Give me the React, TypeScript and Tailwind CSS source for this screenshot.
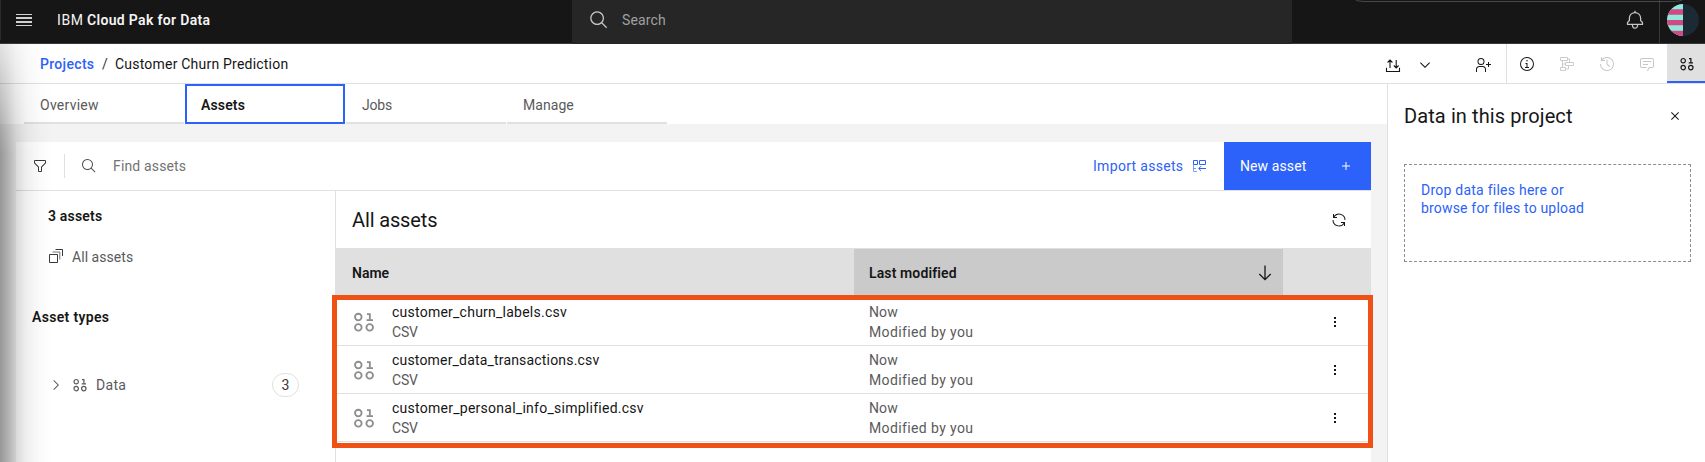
import React from "react";

type IconProps = { size?: number; box?: number; className?: string; children: React.ReactNode };

function Icon({ size = 16, box = 32, className = "", children }: IconProps) {
  return (
    <svg width={size} height={size} viewBox={`0 0 ${box} ${box}`} fill="currentColor" className={`shrink-0 ${className}`}>
      {children}
    </svg>
  );
}

function SearchIcon({ size = 16, className = "" }: { size?: number; className?: string }) {
  return (
    <Icon size={size} className={className}>
      <path d="M29,27.5859l-7.5521-7.5521a11.0177,11.0177,0,1,0-1.4141,1.4141L27.5859,29ZM4,13a9,9,0,1,1,9,9A9.01,9.01,0,0,1,4,13Z" />
    </Icon>
  );
}

function DataIcon({ size = 16, className = "" }: { size?: number; className?: string }) {
  return (
    <Icon size={size} box={16} className={className}>
      <g fill="none" stroke="currentColor" strokeWidth="1.2">
        <circle cx="4.2" cy="4.7" r="2.2" />
        <circle cx="4.2" cy="11.6" r="2.2" />
        <circle cx="11.8" cy="11.6" r="2.2" />
        <path d="M9.7 6.8h4.3M11.9 6.8V2.7H10" />
      </g>
    </Icon>
  );
}

function TopBar() {
  return (
    <header className="relative flex h-[44px] shrink-0 border-b border-[#393939] bg-[#161616] text-[#f4f4f4]">
      <div className="flex h-10 w-[572px] items-center border-l border-[#2c2c2c] pl-[15px]">
        <Icon box={16} className="text-[#d0d0d0]">
          <path d="M0 2h16v1H0zM0 5h16v2H0zM0 9h16v2H0zM0 13h16v1H0z" />
        </Icon>
        <div className="ml-[25px] flex text-sm">
          <span className="w-[30px] tracking-[0.6px]">IBM</span>
          <span className="font-semibold tracking-[0.33px]">Cloud Pak for Data</span>
        </div>
      </div>
      <div className="-mb-px flex h-[44px] w-[720px] items-center bg-[#262626] pb-1 pl-[17px]">
        <SearchIcon size={20} className="mt-[-1px] text-[#c6c6c6]" />
        <span className="ml-[13px] text-sm tracking-[0.14px] text-[#a0a0a0]">Search</span>
      </div>
      <div className="flex flex-1 items-start justify-end">
        <Icon size={20} className="mt-[10px] mr-[14px] text-[#c6c6c6]">
          <path d="M28.7071,19.293,26,16.5859V13a10.0136,10.0136,0,0,0-9-9.9492V1H15V3.0508A10.0136,10.0136,0,0,0,6,13v3.5859L3.2929,19.293A1,1,0,0,0,3,20v3a1,1,0,0,0,1,1h7v.7768a5.152,5.152,0,0,0,4.5,5.1987A5.0057,5.0057,0,0,0,21,25V24h7a1,1,0,0,0,1-1V20A1,1,0,0,0,28.7071,19.293ZM19,25a3,3,0,0,1-6,0V24h6Zm8-3H5V20.4141L7.707,17.707A1,1,0,0,0,8,17V13a8,8,0,0,1,16,0v4a1,1,0,0,0,.293.707L27,20.4141Z" />
        </Icon>
        <div className="flex h-[43px] w-[46px] border-l border-[#393939] pt-1 pl-[7px]">
          <svg width="32" height="32" viewBox="0 0 32 32">
            <defs>
              <clipPath id="avatar"><circle cx="16" cy="16" r="16" /></clipPath>
            </defs>
            <g clipPath="url(#avatar)">
              <rect width="32" height="32" fill="#1c2a36" />
              <rect width="16" height="32" fill="#90e9dc" />
              <path d="M0 5.3h16v5.4H0zM0 16h16v5.3H0zM0 26.7h16V32H0z" fill="#d04b82" />
            </g>
          </svg>
        </div>
      </div>
      <svg width="330" height="3" viewBox="0 0 330 3" className="absolute top-0 left-[1354px]">
        <path d="M0 -1Q3 1.5 10 1.5H320Q327 1.5 330 -1" fill="none" stroke="#484848" />
      </svg>
    </header>
  );
}

function ActionBar() {
  return (
    <div className="flex h-10 shrink-0 border-b border-[#e0e0e0] bg-white text-[#161616]">
      <nav className="flex flex-1 items-center pt-px pl-10 text-sm">
        <span className="w-[62px] font-medium tracking-[0.32px] text-[#2c62f9]">Projects</span>
        <span className="w-[13px] text-[#393939]">/</span>
        <span className="tracking-[0.21px]">Customer Churn Prediction</span>
      </nav>
      <div className="flex w-[121px] items-center pt-[2px]">
        <Icon box={16}>
          <path d="M1.5 10.8v3.7h13v-3.7M5 11V3.2M2.6 5.5L5 3.1l2.4 2.4M11.2 3v8M8.8 8.5l2.4 2.4 2.4-2.4" fill="none" stroke="currentColor" strokeWidth="1.1" />
        </Icon>
        <Icon box={16} className="ml-4">
          <path d="M8 11 3 6 3.7 5.3 8 9.6 12.3 5.3 13 6z" />
        </Icon>
        <Icon className="ml-[42px]">
          <path d="M32 14 28 14 28 10 26 10 26 14 22 14 22 16 26 16 26 20 28 20 28 16 32 16 32 14z" />
          <path d="M12,4A5,5,0,1,1,7,9a5,5,0,0,1,5-5m0-2a7,7,0,1,0,7,7A7,7,0,0,0,12,2Z" />
          <path d="M22,30H20V25a5,5,0,0,0-5-5H9a5,5,0,0,0-5,5v5H2V25a7,7,0,0,1,7-7h6a7,7,0,0,1,7,7Z" />
        </Icon>
      </div>
      <div className="flex w-[161px] items-center gap-6 border-l border-[#e0e0e0] pt-px pl-[12px] text-[#c6c6c6]">
        <Icon className="text-[#161616]">
          <path d="M17 22V14H13V16H15V22H12V24H20V22ZM16,8a1.5,1.5,0,1,0,1.5,1.5A1.5,1.5,0,0,0,16,8Z" />
          <path d="M16,30A14,14,0,1,1,30,16,14,14,0,0,1,16,30ZM16,4A12,12,0,1,0,28,16,12,12,0,0,0,16,4Z" />
        </Icon>
        <Icon box={16}>
          <path d="M1.5 1.5h7v3h-7zM6.5 6.5h8v3h-8zM1.5 11.5h5v3h-5zM3.5 4.5v7M3.5 8h3M6.5 13h3V9.5M8.5 3h2v3.5" fill="none" stroke="currentColor" strokeWidth="0.9" />
        </Icon>
        <Icon>
          <path d="M20.59 22 15 16.41 15 7 17 7 17 15.58 22 20.59 20.59 22z" />
          <path d="M16,2A13.94,13.94,0,0,0,6,6.23V2H4v8h8V8H7.08A12,12,0,1,1,4,16H2A14,14,0,1,0,16,2Z" />
        </Icon>
        <Icon>
          <path d="M17.74,30,16,29l4-7h6a2,2,0,0,0,2-2V8a2,2,0,0,0-2-2H6A2,2,0,0,0,4,8V20a2,2,0,0,0,2,2h9v2H6a4,4,0,0,1-4-4V8A4,4,0,0,1,6,4H26a4,4,0,0,1,4,4V20a4,4,0,0,1-4,4H21.16Z" />
          <path d="M8 10H24V12H8zM8 16H18V18H8z" />
        </Icon>
      </div>
      <div className="flex h-[39px] w-[38px] items-center justify-center border-b-2 border-[#2c62f9] bg-[#e0e0e0] pt-[3px] pl-[2px]">
        <DataIcon />
      </div>
    </div>
  );
}

function Tabs() {
  const base = "flex h-10 w-40 items-center border-b-2 border-[#e0e0e0] pt-[3px] pl-4";
  return (
    <div className="flex h-10 shrink-0 gap-px bg-white pl-6 text-sm text-[#5a5a5a]">
      <div className={base}><span className="tracking-[0.26px]">Overview</span></div>
      <div className="flex h-10 w-40 items-center border-2 border-[#2c62f9] pt-px pl-[14px] font-semibold tracking-[0.15px] text-[#161616]">Assets</div>
      <div className={base}><span className="tracking-[-0.2px]">Jobs</span></div>
      <div className={base}><span className="tracking-[0.05px]">Manage</span></div>
    </div>
  );
}

function Toolbar() {
  return (
    <div className="flex h-[49px] shrink-0 items-stretch border-b border-[#e0e0e0] text-sm">
      <div className="flex flex-1 items-center pl-4 text-[#525252]">
        <Icon className="text-[#393939]">
          <path d="M18,28H14a2,2,0,0,1-2-2V18.41L4.59,11A2,2,0,0,1,4,9.59V6A2,2,0,0,1,6,4H26a2,2,0,0,1,2,2V9.59A2,2,0,0,1,27.41,11L20,18.41V26A2,2,0,0,1,18,28ZM6,6V9.59l8,8V26h4V17.59l8-8V6Z" />
        </Icon>
        <span className="ml-4 h-6 w-px bg-[#e0e0e0]" />
        <SearchIcon className="ml-4" />
        <span className="ml-4 tracking-[0.15px] text-[#737373]">Find assets</span>
      </div>
      <div className="flex w-[131px] items-center text-[#2c62f9]">
        <span className="w-[99px] tracking-[0.31px]">Import assets</span>
        <Icon box={16}>
          <path d="M5.5 2.5h-4v4h4zM7.5 2.5h6v4h-6z" fill="none" stroke="currentColor" />
          <path d="M14 10.5H7M9 8.2l-2.3 2.3L9 12.8" fill="none" stroke="currentColor" />
          <path d="M1.5 6.5v7H5M1.5 10.5H4" fill="none" stroke="currentColor" opacity=".6" />
        </Icon>
      </div>
      <button className="flex w-[147px] items-center justify-between bg-[#2c62f9] pr-[17px] pl-4 text-white">
        <span className="tracking-[0.1px]">New asset</span>
        <Icon><path d="M17 15V8H15V15H8V17H15V24H17V17H24V15z" /></Icon>
      </button>
    </div>
  );
}

function Sidebar() {
  return (
    <aside className="flex w-[320px] shrink-0 flex-col border-r border-[#e0e0e0] text-sm leading-5 text-[#5a5a5a]">
      <div className="mt-[15px] ml-8 font-semibold tracking-[0.18px] text-[#161616]">3 assets</div>
      <div className="mt-[21px] ml-8 flex items-center">
        <Icon box={16} className="mb-[3px] text-[#393939]">
          <path d="M1.5 6.5h8v8h-8zM7.5 1.5h7v6.5" fill="none" stroke="currentColor" />
          <path d="M4.5 4h7.3v7.5" fill="none" stroke="currentColor" opacity=".7" />
        </Icon>
        <span className="ml-2 tracking-[0.05px]">All assets</span>
      </div>
      <div className="mt-10 ml-4 font-semibold tracking-[0.33px] text-[#161616]">Asset types</div>
      <div className="mt-[46px] ml-8 flex h-6 items-center pr-9">
        <Icon box={16}>
          <path d="M11 8 6 13 5.3 12.3 9.6 8 5.3 3.7 6 3z" />
        </Icon>
        <DataIcon className="ml-2" />
        <span className="ml-2 flex-1 tracking-[0.3px]">Data</span>
        <span className="flex h-6 w-[27px] items-center justify-center rounded-full border border-[#e0e0e0] text-[#393939]">3</span>
      </div>
    </aside>
  );
}

const files = [
  { name: "customer_churn_labels.csv", tracking: "tracking-[0.24px]" },
  { name: "customer_data_transactions.csv", tracking: "tracking-[0.18px]" },
  { name: "customer_personal_info_simplified.csv", tracking: "tracking-[0.26px]" },
];

function AssetTable() {
  return (
    <section className="relative flex flex-1 flex-col text-sm leading-5 text-[#161616]">
      <div className="flex h-[57px] items-center justify-between pt-px pr-6 pl-4">
        <h2 className="text-[20px] tracking-[-0.14px]">All assets</h2>
        <Icon>
          <path d="M12,10H6.78A11,11,0,0,1,27,16h2A13,13,0,0,0,6,7.68V4H4v8h8Z" />
          <path d="M20,22h5.22A11,11,0,0,1,5,16H3a13,13,0,0,0,23,8.32V28h2V20H20Z" />
        </Icon>
      </div>
      <div className="flex h-[50px] border-t border-[#e0e0e0] bg-[#e0e0e0] font-semibold">
        <div className="flex h-12 w-[518px] items-center pl-4">Name</div>
        <div className="flex w-[429px] items-center justify-between bg-[#cacaca] pr-[10px] pb-px pl-[15px] tracking-[0.12px]">
          <span>Last modified</span>
          <Icon box={16}>
            <path d="M8 .5v14M2.3 9L8 14.6 13.7 9" fill="none" stroke="currentColor" strokeWidth="1.3" />
          </Icon>
        </div>
      </div>
      {files.map((file) => (
        <div key={file.name} className="flex h-12 items-center border-b border-[#e0e0e0] pt-px">
          <div className="flex w-[518px] items-center pl-4">
            <DataIcon size={24} className="text-[#8d8d8d]" />
            <div className="ml-4">
              <div className={file.tracking}>{file.name}</div>
              <div className="tracking-[-0.2px] text-[#5a5a5a]">CSV</div>
            </div>
          </div>
          <div className="flex-1 pl-[15px] text-[#5a5a5a]">
            <div className="tracking-[0.1px]">Now</div>
            <div className="tracking-[0.38px]">Modified by you</div>
          </div>
          <div className="mr-[35px] flex flex-col gap-[2px]">
            <i className="size-[2px] bg-[#161616]" />
            <i className="size-[2px] bg-[#161616]" />
            <i className="size-[2px] bg-[#161616]" />
          </div>
        </div>
      ))}
      <div className="absolute top-[104px] left-[-4px] h-[153px] w-[1041px] border-5 border-[#ee5015]" />
    </section>
  );
}

function DataPanel() {
  return (
    <aside className="w-[318px] shrink-0 border-l border-[#e0e0e0] bg-white px-4 pt-[17px] text-[#161616]">
      <div className="flex h-[30px] items-center justify-between pr-[6px]">
        <h2 className="text-[20px] tracking-[0.1px]">Data in this project</h2>
        <Icon>
          <path d="M24 9.4 22.6 8 16 14.6 9.4 8 8 9.4 14.6 16 8 22.6 9.4 24 16 17.4 22.6 24 24 22.6 17.4 16 24 9.4z" />
        </Icon>
      </div>
      <div className="mt-[33px] h-[98px] w-[287px] border border-dashed border-[#8d8d8d] p-4 text-sm leading-[18px] text-[#2c62f9]">
        <div className="tracking-[0.24px]">Drop data files here or</div>
        <div className="tracking-[0.18px]">browse for files to upload</div>
      </div>
    </aside>
  );
}

export default function App() {
  return (
    <div className="relative flex h-[462px] w-[1705px] flex-col overflow-hidden bg-white font-['Roboto',sans-serif]">
      <TopBar />
      <ActionBar />
      <div className="flex min-h-0 flex-1">
        <main className="flex w-[1387px] flex-col bg-[#f3f3f3]">
          <Tabs />
          <div className="mt-[18px] ml-4 flex w-[1355px] flex-1 flex-col bg-white">
            <Toolbar />
            <div className="flex flex-1">
              <Sidebar />
              <AssetTable />
            </div>
          </div>
        </main>
        <DataPanel />
      </div>
      <div className="pointer-events-none absolute top-[44px] bottom-0 left-0 w-[52px] bg-[linear-gradient(to_right,rgba(0,0,0,0.38),rgba(0,0,0,0.27)_8px,rgba(0,0,0,0.15)_16px,rgba(0,0,0,0.06)_27px,rgba(0,0,0,0.02)_40px,transparent)] [mask-image:linear-gradient(to_bottom,rgba(0,0,0,0.3),black_110px)]" />
    </div>
  );
}
